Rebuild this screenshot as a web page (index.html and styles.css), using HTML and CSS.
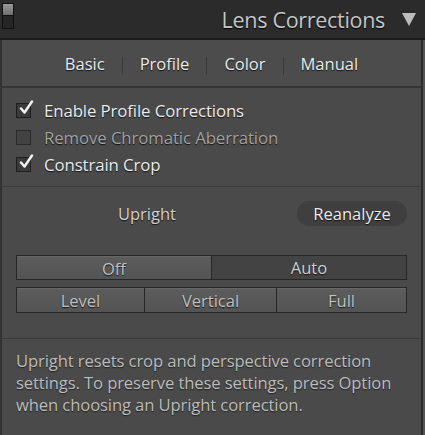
FILE: index.html
```html
<!DOCTYPE html>
<html>
<head>
<meta charset="utf-8">
<link rel="stylesheet" href="styles.css">
</head>
<body>
<div class="panel">
  <div class="header">
    <div class="switch"><span class="switch-top"></span><span class="switch-bottom"></span></div>
    <div class="title">Lens Corrections</div>
    <div class="triangle"></div>
  </div>
  <div class="body">
    <div class="tabs">
      <span class="tab">Basic</span>
      <span class="sep"></span>
      <span class="tab">Profile</span>
      <span class="sep"></span>
      <span class="tab">Color</span>
      <span class="sep"></span>
      <span class="tab">Manual</span>
    </div>
    <div class="checks">
      <div class="check-row">
        <span class="box"><svg viewBox="0 0 16 16" width="16" height="16"><path d="M3 8.5 L6.5 12.5 L14 1.5" fill="none" stroke="#f2f2f2" stroke-width="2.5" stroke-linecap="round" stroke-linejoin="round"/></svg></span>
        <span class="label">Enable Profile Corrections</span>
      </div>
      <div class="check-row disabled">
        <span class="box"></span>
        <span class="label">Remove Chromatic Aberration</span>
      </div>
      <div class="check-row">
        <span class="box"><svg viewBox="0 0 16 16" width="16" height="16"><path d="M3 8.5 L6.5 12.5 L14 1.5" fill="none" stroke="#f2f2f2" stroke-width="2.5" stroke-linecap="round" stroke-linejoin="round"/></svg></span>
        <span class="label">Constrain Crop</span>
      </div>
    </div>
    <div class="upright">
      <div class="upright-head">
        <span class="upright-label">Upright</span>
        <span class="reanalyze">Reanalyze</span>
      </div>
      <div class="seg seg2">
        <span class="btn on">Off</span>
        <span class="btn">Auto</span>
      </div>
      <div class="seg seg3">
        <span class="btn on">Level</span>
        <span class="btn on">Vertical</span>
        <span class="btn on">Full</span>
      </div>
    </div>
    <div class="info">
      Upright resets crop and perspective correction settings. To preserve these settings, press Option when choosing an Upright correction.
    </div>
  </div>
</div>
</body>
</html>
```

FILE: styles.css
```css
html, body {
  margin: 0;
  padding: 0;
}
body {
  background: #555555;
  font-family: "Open Sans", "Noto Sans", sans-serif;
}
.panel {
  width: 425px;
  height: 435px;
  overflow: hidden;
}
.header {
  height: 38px;
  background: #2b2b2b;
  border-bottom: 2px solid #1c1c1c;
  display: flex;
  align-items: center;
  box-sizing: content-box;
}
.switch {
  width: 10px;
  height: 24px;
  margin-left: 2px;
  align-self: flex-start;
  margin-top: 3px;
  border: 1px solid #111;
  background: #1e1e1e;
  display: flex;
  flex-direction: column;
}
.switch-top {
  height: 11px;
  background: linear-gradient(#9a9a9a, #6e6e6e);
  border-bottom: 1px solid #111;
}
.switch-bottom {
  flex: 1;
  background: #252525;
}
.title {
  margin-left: auto;
  color: #c6c6c6;
  font-size: 21.5px;
  letter-spacing: -0.3px;
  text-shadow: 0 1px 1px #000;
}
.triangle {
  width: 0;
  height: 0;
  border-left: 7px solid transparent;
  border-right: 7px solid transparent;
  border-top: 13px solid #bdbdbd;
  margin-left: 17px;
  margin-right: 9px;
}
.body {
  width: 419px;
  border-left: 2px solid #333;
  border-right: 2px solid #2c2c2c;
  background: #4a4a4a;
  height: 395px;
}
.tabs {
  height: 46px;
  border-bottom: 2px solid #353535;
  display: flex;
  align-items: center;
  justify-content: center;
  gap: 17px;
  background: #4c4c4c;
}
.tab {
  color: #ececec;
  font-size: 16.5px;
  text-shadow: 0 1px 1px #111;
}
.sep {
  width: 1px;
  height: 18px;
  background: #3a3a3a;
  margin-top: 6px;
}
.checks {
  padding: 9px 0 8px 14px;
  border-bottom: 1px solid #3c3c3c;
}
.check-row {
  height: 27px;
  display: flex;
  align-items: center;
}
.box {
  width: 13px;
  height: 13px;
  border: 1px solid #1e1e1e;
  background: #3a3a3a;
  position: relative;
  margin-right: 13px;
}
.box svg {
  position: absolute;
  left: 1px;
  top: -4px;
}
.label {
  color: #ececec;
  font-size: 16.8px;
  letter-spacing: -0.1px;
  text-shadow: 0 1px 1px #111;
}
.disabled .label {
  color: #a2a2a2;
}
.disabled .box {
  background: #424242;
  border-color: #2a2a2a;
}
.upright {
  padding: 14px 14px 25px 14px;
  border-bottom: 1px solid #3a3a3a;
}
.upright-head {
  display: flex;
  align-items: center;
  height: 25px;
  margin-bottom: 29px;
}
.upright-label {
  color: #d2d2d2;
  font-size: 16.5px;
  margin-left: 102px;
  text-shadow: 0 1px 1px #111;
}
.reanalyze {
  margin-left: auto;
  width: 110px;
  height: 25px;
  border-radius: 13px;
  background: #3f3f3f;
  color: #ececec;
  font-size: 16.5px;
  display: flex;
  align-items: center;
  justify-content: center;
  text-shadow: 0 1px 1px #111;
}
.seg {
  display: flex;
  border: 1px solid #262626;
  background: #262626;
  gap: 1px;
}
.seg2 {
  height: 23px;
  margin-bottom: 7px;
}
.seg3 {
  height: 24px;
}
.btn {
  flex: 1;
  display: flex;
  align-items: center;
  justify-content: center;
  background: #434343;
  color: #d0d0d0;
  font-size: 16.5px;
  text-shadow: 0 1px 1px #111;
}
.btn.on {
  background: linear-gradient(#5c5c5c, #545454);
  border-top: 1px solid #676767;
  color: #c2c2c2;
}
.seg3 .btn:nth-child(1) { flex: 0 0 127px; }
.seg3 .btn:nth-child(2) { flex: 0 0 131px; }
.info {
  padding: 11px 10px 0 14px;
  color: #bdbdbd;
  font-size: 16.6px;
  line-height: 22px;
  letter-spacing: -0.1px;
  text-shadow: 0 1px 1px #222;
}
```
